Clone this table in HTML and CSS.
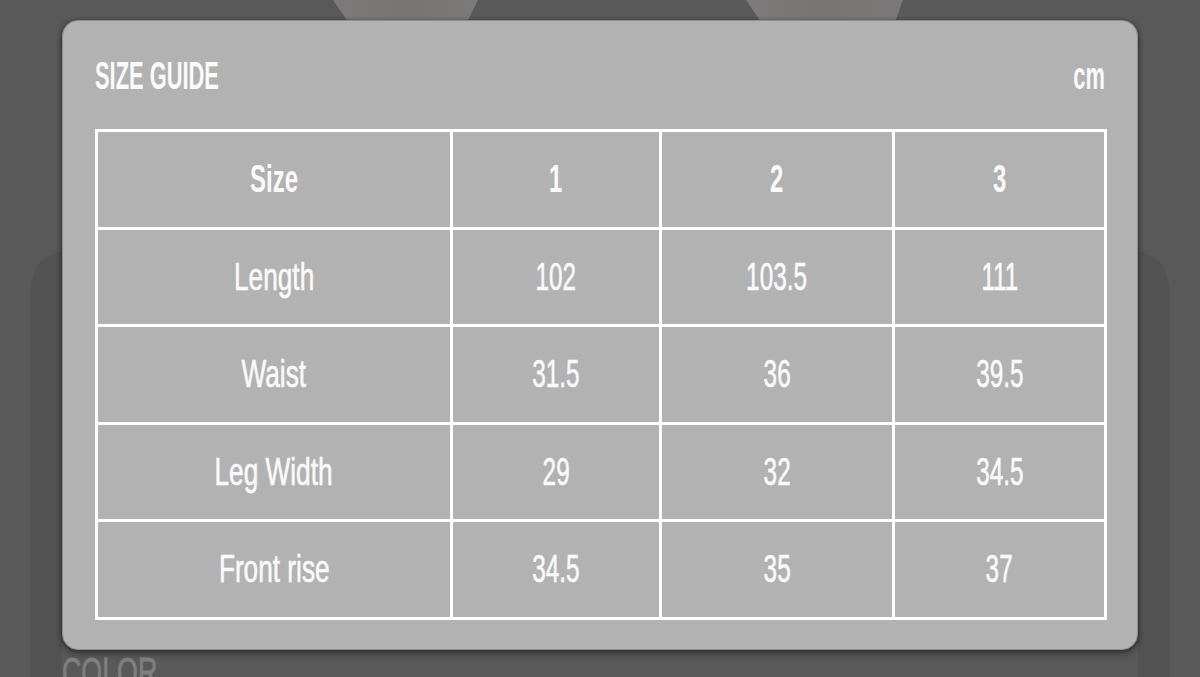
FILE: index.html
```html
<!DOCTYPE html>
<html lang="en">
<head>
<meta charset="utf-8">
<title>Size Guide</title>
<link rel="stylesheet" href="styles.css">
</head>
<body>
<svg class="backdrop" width="1200" height="677" viewBox="0 0 1200 677" aria-hidden="true">
  <defs>
    <linearGradient id="g1" x1="0" y1="0" x2="1" y2="0">
      <stop offset="0" stop-color="#7c7a7a"/>
      <stop offset="0.5" stop-color="#797575"/>
      <stop offset="1" stop-color="#7b7979"/>
    </linearGradient>
  </defs>
  <path d="M333 0 H478 L467 22 H348 Z" fill="url(#g1)"/>
  <path d="M746 0 H903 L895 22 H761 Z" fill="url(#g1)"/>
  <path d="M30 300 Q30 255 62 252 V677 H30 Z" fill="#535353"/>
  <path d="M1170 300 Q1170 255 1138 252 V677 H1170 Z" fill="#535353"/>
</svg>

<section class="modal">
  <header class="modal-head">
    <h2 class="title"><span class="sq sq-left sq-title">SIZE GUIDE</span></h2>
    <span class="unit"><span class="sq sq-right sq-title">cm</span></span>
  </header>
  <table class="guide">
    <colgroup>
      <col class="c0"><col class="c1"><col class="c2"><col class="c3">
    </colgroup>
    <thead>
      <tr>
        <th><span class="sq sq-head">Size</span></th>
        <th><span class="sq sq-head">1</span></th>
        <th><span class="sq sq-head">2</span></th>
        <th><span class="sq sq-head">3</span></th>
      </tr>
    </thead>
    <tbody>
      <tr>
        <td><span class="sq sq-word">Length</span></td>
        <td><span class="sq sq-num">102</span></td>
        <td><span class="sq sq-num">103.5</span></td>
        <td><span class="sq sq-num">111</span></td>
      </tr>
      <tr>
        <td><span class="sq sq-word">Waist</span></td>
        <td><span class="sq sq-num">31.5</span></td>
        <td><span class="sq sq-num">36</span></td>
        <td><span class="sq sq-num">39.5</span></td>
      </tr>
      <tr>
        <td><span class="sq sq-word">Leg Width</span></td>
        <td><span class="sq sq-num">29</span></td>
        <td><span class="sq sq-num">32</span></td>
        <td><span class="sq sq-num">34.5</span></td>
      </tr>
      <tr>
        <td><span class="sq sq-word">Front rise</span></td>
        <td><span class="sq sq-num">34.5</span></td>
        <td><span class="sq sq-num">35</span></td>
        <td><span class="sq sq-num">37</span></td>
      </tr>
    </tbody>
  </table>
</section>

<div class="color-label"><span class="sq sq-left sq-color">COLOR</span></div>
</body>
</html>
```

FILE: styles.css
```css
html, body {
  margin: 0;
  padding: 0;
}

body {
  width: 1200px;
  height: 677px;
  overflow: hidden;
  background: #595959;
  font-family: "Liberation Sans", Arial, sans-serif;
  color: #fafafa;
  position: relative;
}

.backdrop {
  position: absolute;
  left: 0;
  top: 0;
  z-index: 0;
}

.modal {
  position: relative;
  z-index: 1;
  box-sizing: border-box;
  width: 1076px;
  height: 630px;
  margin: 20px 0 0 62px;
  padding: 36px 32px 32px;
  background: #b2b2b2;
  border: 1px solid #8e8e8e;
  border-radius: 16px;
  box-shadow: 0 4px 6px rgba(0, 0, 0, 0.35), 2px 0 4px rgba(0, 0, 0, 0.15), -2px 0 4px rgba(0, 0, 0, 0.15);
}

.modal-head {
  display: flex;
  justify-content: space-between;
  align-items: flex-start;
  height: 38px;
  margin-bottom: 34px;
}

.title {
  margin: 0;
  font-size: 38px;
  line-height: 38px;
  font-weight: 700;
}

.unit {
  font-size: 38px;
  line-height: 38px;
  font-weight: 700;
}

.sq {
  display: inline-block;
  white-space: nowrap;
  transform-origin: center;
}

.sq-left { transform-origin: left center; }
.sq-right { transform-origin: right center; }

.sq-title { transform: scaleX(0.575); }
.sq-head { transform: scaleX(0.63); }
.sq-word { transform: scaleX(0.69); }
.sq-num { transform: scaleX(0.64); }
.sq-color { transform: scaleX(0.67); }

.guide {
  width: 1009px;
  border-collapse: collapse;
  table-layout: fixed;
}

.c0 { width: 355px; }
.c1 { width: 209px; }
.c2 { width: 233px; }
.c3 { width: 212px; }

.guide tr {
  height: 97.5px;
}

.guide th,
.guide td {
  border: 3px solid #ffffff;
  padding: 0;
  text-align: center;
  vertical-align: middle;
  font-size: 38px;
  line-height: 38px;
}

.guide th {
  font-weight: 700;
}

.guide td {
  font-weight: 400;
  -webkit-text-stroke: 0.6px #fafafa;
}

.color-label {
  position: relative;
  z-index: 1;
  margin: 2px 0 0 62px;
  font-size: 40px;
  line-height: 40px;
  font-weight: 400;
  color: #7f7f7f;
  -webkit-text-stroke: 0.8px #7f7f7f;
}
```
